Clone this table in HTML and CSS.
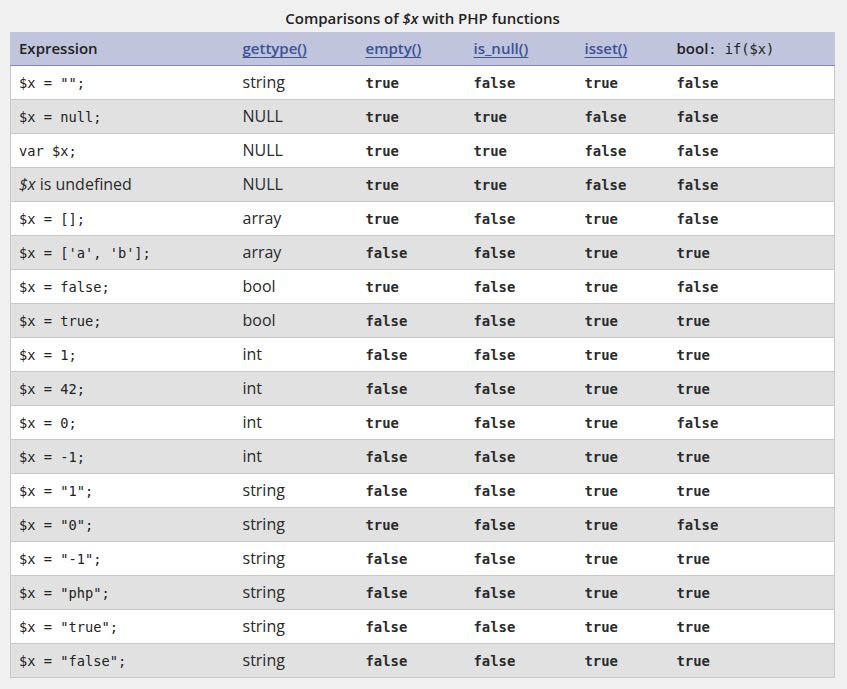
FILE: index.html
```html
<!DOCTYPE html>
<html lang="en">
<head>
<meta charset="utf-8">
<title>Comparisons of $x with PHP functions</title>
<link rel="stylesheet" href="styles.css">
</head>
<body>
<table class="cmp">
<caption>Comparisons of <i>$x</i> with PHP functions</caption>
<thead>
<tr>
<th class="c1">Expression</th>
<th class="c2"><a href="#">gettype()</a></th>
<th class="c3"><a href="#">empty()</a></th>
<th class="c4"><a href="#">is_null()</a></th>
<th class="c5"><a href="#">isset()</a></th>
<th class="c6">bool<code class="hc">: if($x)</code></th>
</tr>
</thead>
<tbody>
<tr><td><code>$x = "";</code></td><td>string</td><td><b>true</b></td><td><b>false</b></td><td><b>true</b></td><td><b>false</b></td></tr>
<tr><td><code>$x = null;</code></td><td>NULL</td><td><b>true</b></td><td><b>true</b></td><td><b>false</b></td><td><b>false</b></td></tr>
<tr><td><code>var $x;</code></td><td>NULL</td><td><b>true</b></td><td><b>true</b></td><td><b>false</b></td><td><b>false</b></td></tr>
<tr><td><i>$x</i> is undefined</td><td>NULL</td><td><b>true</b></td><td><b>true</b></td><td><b>false</b></td><td><b>false</b></td></tr>
<tr><td><code>$x = [];</code></td><td>array</td><td><b>true</b></td><td><b>false</b></td><td><b>true</b></td><td><b>false</b></td></tr>
<tr><td><code>$x = ['a', 'b'];</code></td><td>array</td><td><b>false</b></td><td><b>false</b></td><td><b>true</b></td><td><b>true</b></td></tr>
<tr><td><code>$x = false;</code></td><td>bool</td><td><b>true</b></td><td><b>false</b></td><td><b>true</b></td><td><b>false</b></td></tr>
<tr><td><code>$x = true;</code></td><td>bool</td><td><b>false</b></td><td><b>false</b></td><td><b>true</b></td><td><b>true</b></td></tr>
<tr><td><code>$x = 1;</code></td><td>int</td><td><b>false</b></td><td><b>false</b></td><td><b>true</b></td><td><b>true</b></td></tr>
<tr><td><code>$x = 42;</code></td><td>int</td><td><b>false</b></td><td><b>false</b></td><td><b>true</b></td><td><b>true</b></td></tr>
<tr><td><code>$x = 0;</code></td><td>int</td><td><b>true</b></td><td><b>false</b></td><td><b>true</b></td><td><b>false</b></td></tr>
<tr><td><code>$x = -1;</code></td><td>int</td><td><b>false</b></td><td><b>false</b></td><td><b>true</b></td><td><b>true</b></td></tr>
<tr><td><code>$x = "1";</code></td><td>string</td><td><b>false</b></td><td><b>false</b></td><td><b>true</b></td><td><b>true</b></td></tr>
<tr><td><code>$x = "0";</code></td><td>string</td><td><b>true</b></td><td><b>false</b></td><td><b>true</b></td><td><b>false</b></td></tr>
<tr><td><code>$x = "-1";</code></td><td>string</td><td><b>false</b></td><td><b>false</b></td><td><b>true</b></td><td><b>true</b></td></tr>
<tr><td><code>$x = "php";</code></td><td>string</td><td><b>false</b></td><td><b>false</b></td><td><b>true</b></td><td><b>true</b></td></tr>
<tr><td><code>$x = "true";</code></td><td>string</td><td><b>false</b></td><td><b>false</b></td><td><b>true</b></td><td><b>true</b></td></tr>
<tr><td><code>$x = "false";</code></td><td>string</td><td><b>false</b></td><td><b>false</b></td><td><b>true</b></td><td><b>true</b></td></tr>
</tbody>
</table>
</body>
</html>
```
FILE: styles.css
```css
html, body {
  margin: 0;
  padding: 0;
  background: #f0f0f0;
}
body {
  padding: 8px 10px 0 10px;
  font-family: "Open Sans", "Noto Sans", sans-serif;
  color: #222;
}
.cmp {
  width: 825px;
  border-collapse: collapse;
  font-size: 16px;
  table-layout: fixed;
  border-left: 1px solid #c8c8c8;
  border-right: 1px solid #c8c8c8;
  border-bottom: 1px solid #c8c8c8;
}
.cmp caption {
  font-weight: 600;
  font-size: 15px;
  height: 24px;
  line-height: 20px;
  color: #222;
}
.cmp caption i {
  font-style: italic;
}
.cmp th {
  background: #c0c4dc;
  text-align: left;
  font-weight: 600;
  font-size: 15px;
  height: 33px;
  padding: 0 8px;
  border-bottom: 1px solid #7c88c6;
  box-sizing: border-box;
  vertical-align: middle;
}
.cmp th a {
  color: #3b5294;
  text-decoration: underline;
  text-underline-offset: 3px;
  font-weight: 600;
}
.cmp .c1 { width: 224px; }
.cmp .c2 { width: 123px; }
.cmp .c3 { width: 108px; }
.cmp .c4 { width: 111px; }
.cmp .c5 { width: 92px; }
.cmp .hc {
  font-family: "DejaVu Sans Mono", monospace;
  font-size: 13.7px;
  font-weight: normal;
}
.cmp td {
  height: 34px;
  padding: 0 8px;
  box-sizing: border-box;
  border-top: 1px solid #c8c8c8;
  vertical-align: middle;
  color: #2a2a2a;
}
.cmp tbody tr:first-child td {
  border-top: none;
}
.cmp tbody tr:nth-child(odd) td {
  background: #ffffff;
}
.cmp tbody tr:nth-child(even) td {
  background: #e1e1e1;
}
.cmp code {
  font-family: "DejaVu Sans Mono", monospace;
  font-size: 13.7px;
  color: #222;
}
.cmp b {
  font-family: "DejaVu Sans Mono", monospace;
  font-size: 13.9px;
  font-weight: bold;
}
```
